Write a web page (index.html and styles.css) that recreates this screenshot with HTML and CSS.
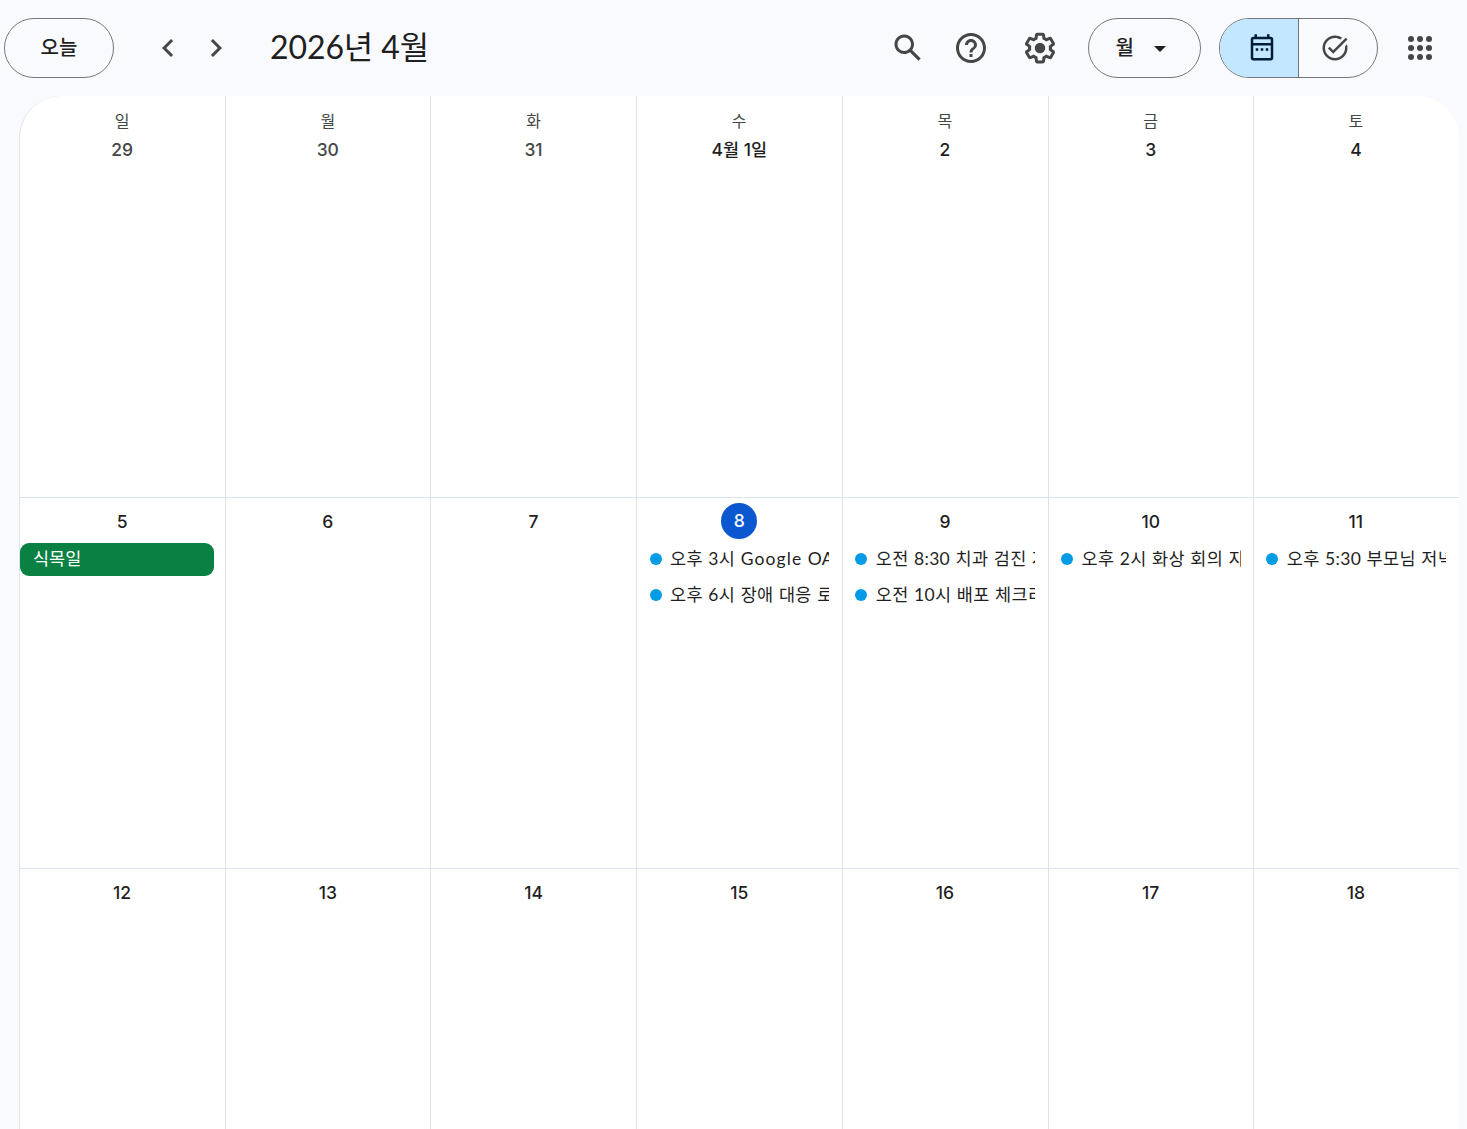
FILE: index.html
```html
<!DOCTYPE html>
<html lang="ko">
<head>
<meta charset="utf-8">
<title>캘린더</title>
<link rel="stylesheet" href="styles.css">
</head>
<body>
<header class="topbar">
  <button class="pill today">오늘</button>
  <nav class="pager">
    <svg class="icon" viewBox="0 0 24 24"><path d="M15.41 7.41 14 6l-6 6 6 6 1.41-1.41L10.83 12z"/></svg>
    <svg class="icon" viewBox="0 0 24 24"><path d="M10 6 8.59 7.41 13.17 12l-4.58 4.59L10 18l6-6z"/></svg>
  </nav>
  <h1 class="title">2026년 4월</h1>
  <div class="tools">
    <svg class="icon" viewBox="0 0 24 24"><path d="M20.49 19l-5.73-5.73C15.53 12.2 16 10.91 16 9.5 16 5.91 13.09 3 9.5 3S3 5.91 3 9.5 5.91 16 9.5 16c1.41 0 2.7-.47 3.77-1.24L19 20.49 20.49 19zM5 9.5C5 7.01 7.01 5 9.5 5S14 7.01 14 9.5 11.99 14 9.5 14 5 11.99 5 9.5z"/></svg>
    <svg class="icon help" viewBox="0 0 24 24"><path d="M11 18h2v-2h-2v2zm1-16C6.48 2 2 6.48 2 12s4.48 10 10 10 10-4.48 10-10S17.52 2 12 2zm0 18c-4.41 0-8-3.59-8-8s3.59-8 8-8 8 3.59 8 8-3.59 8-8 8zm0-14c-2.21 0-4 1.79-4 4h2c0-1.1.9-2 2-2s2 .9 2 2c0 2-3 1.75-3 5h2c0-2.25 3-2.5 3-5 0-2.21-1.79-4-4-4z"/></svg>
    <svg class="icon gear" viewBox="0 0 24 24"><path d="M13.85 22.25h-3.7c-.74 0-1.36-.54-1.45-1.27l-.27-1.89c-.27-.14-.53-.29-.79-.46l-1.8.72c-.7.26-1.47-.03-1.81-.65L2.2 15.53c-.35-.66-.2-1.44.36-1.88l1.53-1.19c-.01-.15-.02-.3-.02-.46 0-.15.01-.31.02-.46l-1.52-1.19c-.59-.45-.74-1.26-.37-1.88l1.85-3.19c.34-.62 1.11-.9 1.79-.63l1.81.73c.26-.17.52-.32.78-.46l.27-1.91c.09-.7.71-1.25 1.44-1.25h3.7c.74 0 1.36.54 1.45 1.27l.27 1.89c.27.14.53.29.79.46l1.8-.72c.71-.26 1.48.03 1.82.65l1.84 3.18c.36.66.2 1.44-.36 1.88l-1.52 1.19c.01.15.02.3.02.46s-.01.31-.02.46l1.52 1.19c.56.45.72 1.23.37 1.86l-1.86 3.22c-.34.62-1.11.9-1.8.63l-1.8-.72c-.26.17-.52.32-.78.46l-.27 1.91c-.1.68-.72 1.22-1.46 1.22zm-3.23-2h2.76l.37-2.55.53-.22c.44-.18.88-.44 1.34-.78l.45-.34 2.38.96 1.38-2.4-2.03-1.58.07-.56c.03-.26.06-.51.06-.78s-.03-.53-.06-.78l-.07-.56 2.03-1.58-1.39-2.4-2.39.96-.45-.35c-.42-.32-.87-.58-1.33-.77l-.52-.22-.37-2.55h-2.76l-.37 2.55-.53.21c-.44.19-.88.44-1.34.79l-.45.33-2.38-.95-1.39 2.39 2.03 1.58-.07.56a7 7 0 0 0-.06.79c0 .26.02.53.06.78l.07.56-2.03 1.58 1.38 2.4 2.39-.96.45.35c.43.33.86.58 1.33.77l.53.22.38 2.55z"/><circle cx="12" cy="12" r="3.5"/></svg>
    <button class="pill view">월<span class="caret"></span></button>
    <div class="switch">
      <span class="half active"><svg class="small" viewBox="0 0 24 24"><path d="M19 3h-1V1h-2v2H8V1H6v2H5c-1.11 0-1.99.9-1.99 2L3 20c0 1.1.89 2 2 2h14c1.1 0 2-.9 2-2V5c0-1.1-.9-2-2-2zm0 17H5V10h14v10zm0-12H5V5h14v3zM7 12.2h2v2H7zm4 0h2v2h-2zm4 0h2v2h-2z"/></svg></span>
      <span class="half"><svg class="small" viewBox="0 0 24 24"><path d="M22 5.18 10.59 16.6l-4.24-4.24 1.41-1.41 2.83 2.83 10-10L22 5.18zM12 20c-4.41 0-8-3.59-8-8s3.59-8 8-8c1.57 0 3.04.46 4.28 1.25l1.45-1.45A10.02 10.02 0 0 0 12 2C6.48 2 2 6.48 2 12s4.48 10 10 10 10-4.48 10-10c0-1.01-.15-1.99-.43-2.91l-1.61 1.61c.03.43.04.87.04 1.3 0 4.41-3.59 8-8 8z"/></svg></span>
    </div>
    <svg class="icon apps" viewBox="0 0 24 24"><circle cx="6" cy="6" r="2"/><circle cx="12" cy="6" r="2"/><circle cx="18" cy="6" r="2"/><circle cx="6" cy="12" r="2"/><circle cx="12" cy="12" r="2"/><circle cx="18" cy="12" r="2"/><circle cx="6" cy="18" r="2"/><circle cx="12" cy="18" r="2"/><circle cx="18" cy="18" r="2"/></svg>
  </div>
</header>
<main class="month">
  <section class="week first">
    <div class="day"><div class="name">일</div><div class="num dim">29</div></div>
    <div class="day"><div class="name">월</div><div class="num dim">30</div></div>
    <div class="day"><div class="name">화</div><div class="num dim">31</div></div>
    <div class="day"><div class="name">수</div><div class="num">4월 1일</div></div>
    <div class="day"><div class="name">목</div><div class="num">2</div></div>
    <div class="day"><div class="name">금</div><div class="num">3</div></div>
    <div class="day"><div class="name">토</div><div class="num">4</div></div>
  </section>
  <section class="week">
    <div class="day"><div class="num">5</div><div class="chip">식목일</div></div>
    <div class="day"><div class="num">6</div></div>
    <div class="day"><div class="num">7</div></div>
    <div class="day"><div class="num now">8</div>
      <div class="event"><span class="text">오후 3시 <span class="latin">Google</span> OA</span></div>
      <div class="event"><span class="text">오후 6시 장애 대응 로</span></div></div>
    <div class="day"><div class="num">9</div>
      <div class="event"><span class="text">오전 8:30 치과 검진 자</span></div>
      <div class="event"><span class="text">오전 10시 배포 체크리</span></div></div>
    <div class="day"><div class="num">10</div>
      <div class="event"><span class="text">오후 2시 화상 회의 자</span></div></div>
    <div class="day"><div class="num">11</div>
      <div class="event"><span class="text">오후 5:30 부모님 저녁</span></div></div>
  </section>
  <section class="week last">
    <div class="day"><div class="num">12</div></div>
    <div class="day"><div class="num">13</div></div>
    <div class="day"><div class="num">14</div></div>
    <div class="day"><div class="num">15</div></div>
    <div class="day"><div class="num">16</div></div>
    <div class="day"><div class="num">17</div></div>
    <div class="day"><div class="num">18</div></div>
  </section>
</main>
</body>
</html>
```
FILE: styles.css
```css
* { box-sizing: border-box; }
body {
  margin: 0;
  height: 1129px;
  overflow: hidden;
  background: #f8fafd;
  color: #1f1f1f;
  font-family: Lato, "Noto Sans CJK KR", sans-serif;
  display: flex;
  flex-direction: column;
}
.topbar {
  height: 96px;
  flex: none;
  display: flex;
  align-items: center;
  padding: 0 29px 0 4px;
}
.pill {
  height: 60px;
  border: 1px solid #747775;
  border-radius: 30px;
  background: none;
  color: #1f1f1f;
  font: 500 20px/56px Lato, "Noto Sans CJK KR", sans-serif;
  padding: 0 0 2px;
}
.today { width: 110px; }
.icon { width: 36px; height: 36px; flex: none; fill: #444746; }
.small { width: 30px; height: 30px; fill: #444746; }
.pager { display: flex; gap: 12px; margin-left: 36px; }
.title {
  margin: 0 0 3px 36px;
  font-size: 32px;
  font-weight: 400;
  line-height: 48px;
  letter-spacing: -0.1px;
  white-space: nowrap;
}
.tools { display: flex; align-items: center; margin-left: auto; }
.help { margin-left: 27px; }
.gear { margin-left: 33px; }
.view {
  width: 113px;
  margin-left: 30px;
  display: flex;
  align-items: center;
  padding-left: 26.5px;
}
.caret {
  border: 6px solid transparent;
  border-top-color: #1f1f1f;
  border-bottom: 0;
  margin: 3px 0 0 20px;
}
.switch {
  width: 159px;
  height: 60px;
  margin-left: 18px;
  display: flex;
  border: 1px solid #747775;
  border-radius: 30px;
  overflow: hidden;
}
.half { flex: 1; display: flex; align-items: center; padding-left: 21px; }
.active { flex: 0 0 79px; padding-left: 27px; background: #c2e7ff; border-right: 1px solid #747775; }
.active .small { fill: #001d35; }
.apps { margin-left: 24px; }
.month {
  flex: 1;
  margin: 0 8px 0 19px;
  background: #fff;
  border-left: 1px solid #dde3ea;
  border-radius: 42px 42px 0 0;
  overflow: hidden;
  display: grid;
  grid-template-rows: 402px 371px 1fr;
}
.week {
  display: grid;
  grid-template-columns: repeat(7, 205.72px);
  border-bottom: 1px solid #dde3ea;
}
.last { border-bottom: 0; }
.day { border-right: 1px solid #dde3ea; padding: 5px 0.6px 0 0; }
.day:last-child { border-right: 0; padding-right: 2.6px; }
.first .day { padding-top: 14px; }
.name {
  height: 21px;
  line-height: 22px;
  font-size: 16px;
  text-align: center;
  color: #444746;
}
.num {
  height: 36px;
  line-height: 38px;
  font-size: 17.5px;
  font-family: Inter, "Noto Sans CJK KR", sans-serif;
  font-weight: 500;
  text-align: center;
  margin-bottom: 4px;
}
.dim { color: #444746; }
.now {
  width: 36px;
  line-height: 36px;
  margin-left: auto;
  margin-right: auto;
  border-radius: 50%;
  background: #0b57d0;
  color: #fff;
}
.chip {
  height: 33px;
  margin-right: 10.4px;
  padding-left: 13px;
  border-radius: 9px;
  background: #0b8043;
  color: #fff;
  font-size: 17.5px;
  line-height: 31px;
}
.event {
  height: 32px;
  margin: 0 12px 4px 12.4px;
  display: flex;
  align-items: center;
  gap: 8.5px;
}
.day:last-child .event { margin-left: 12px; margin-right: 11px; }
.event::before {
  content: "";
  width: 12px;
  height: 12px;
  flex: none;
  border-radius: 50%;
  background: #039be5;
}
.text {
  flex: 1;
  min-width: 0;
  overflow: hidden;
  white-space: nowrap;
  font-size: 17.5px;
  line-height: 30px;
  letter-spacing: 0.3px;
  word-spacing: 0.7px;
}
.latin { letter-spacing: 1.1px; }
```
